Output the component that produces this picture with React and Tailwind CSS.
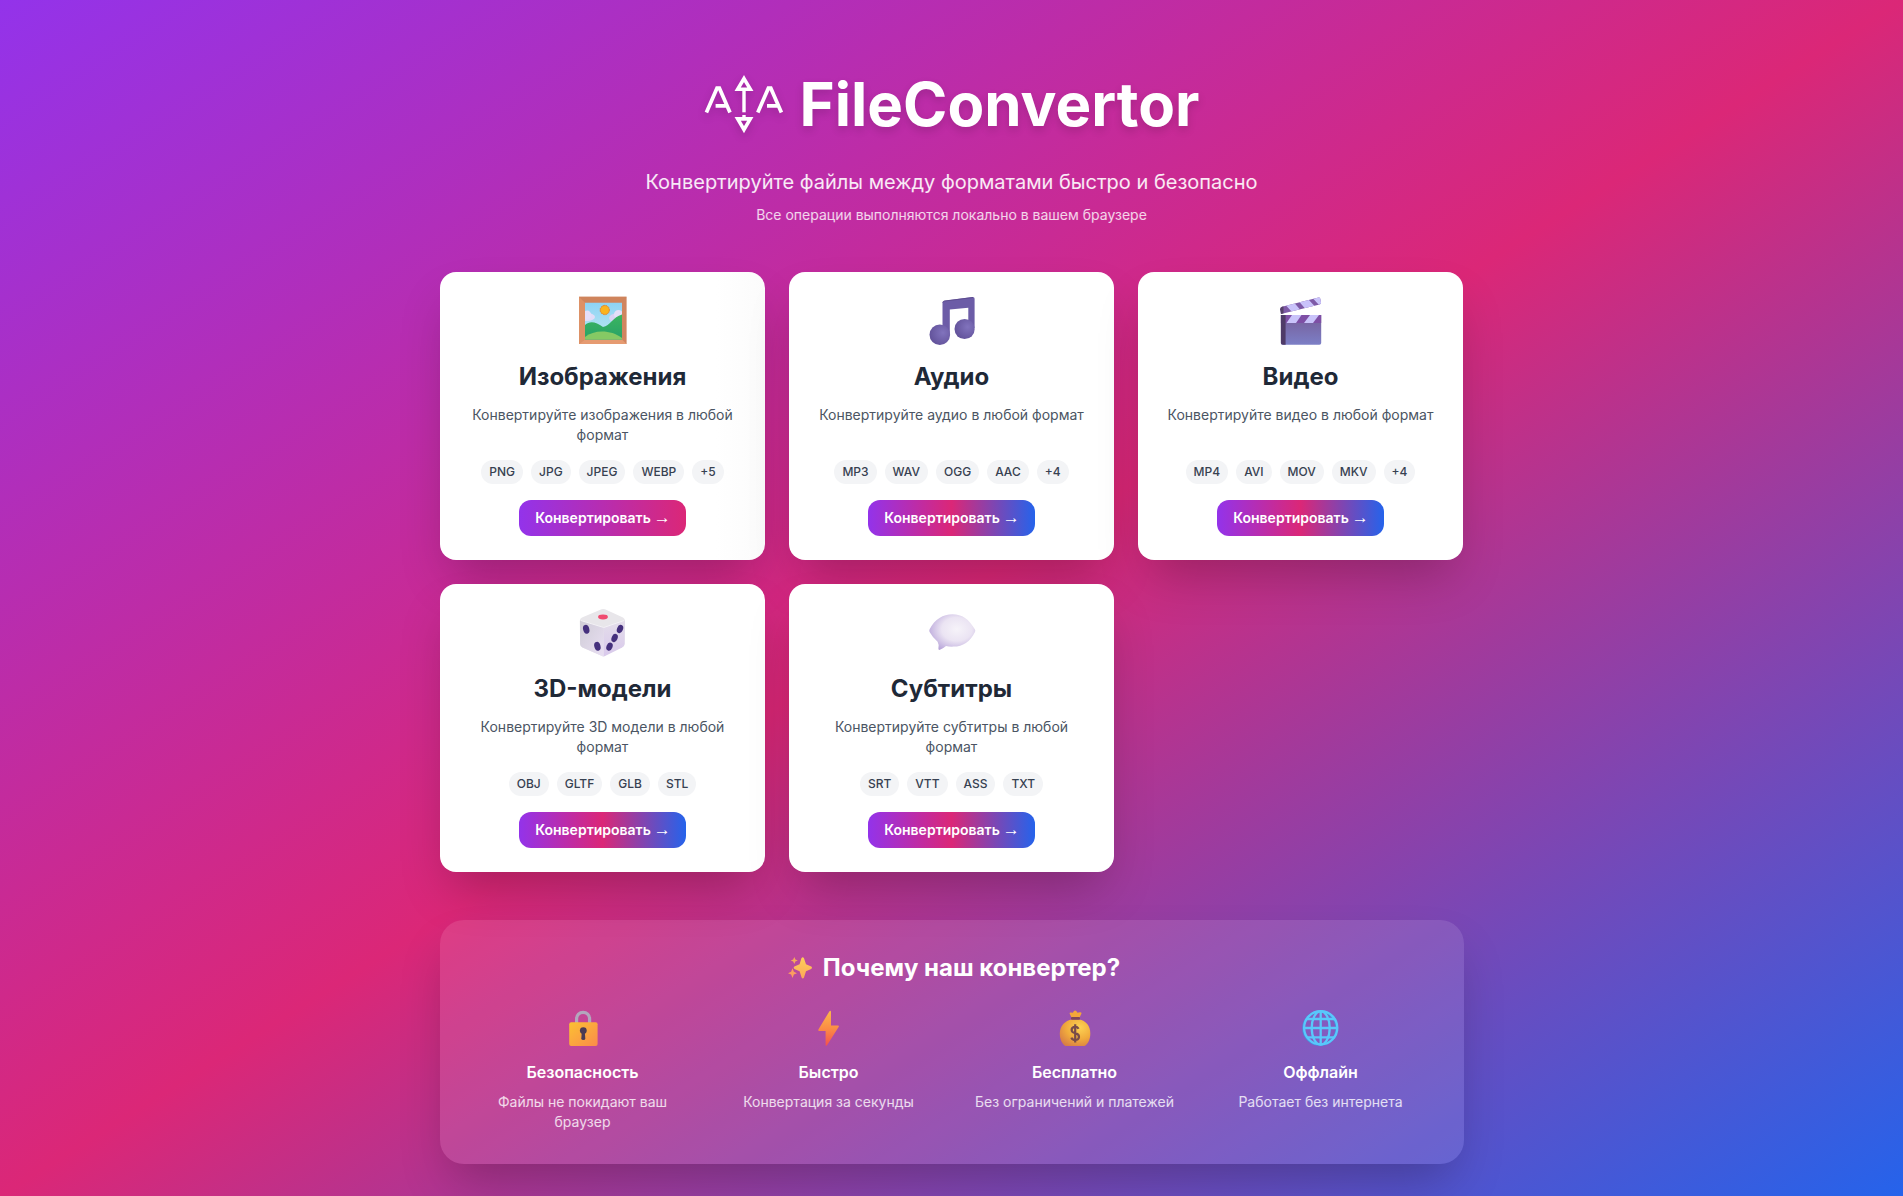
import React from 'react';

const Logo = () => (
  <svg viewBox="0 0 80 80" className="h-20 w-20 drop-shadow-lg" fill="none" stroke="#fff" strokeWidth="3.7">
    <path d="M2.4 48.4 L13 24.2 H15.4 L26 48.4 M22.8 41.8 H11.6" />
    <path d="M53.8 48.4 L64.4 24.2 H66.8 L77.4 48.4 M74.2 41.8 H63" />
    <path d="M40 26 V48.3" strokeWidth="3.4" />
    <path d="M40 14.6 L46.3 25.2 H33.7 Z" strokeWidth="3.6" />
    <path d="M40 65.6 L46.3 54.9 H33.7 Z" strokeWidth="3.6" />
    <path d="M40 51 V54" strokeWidth="3.4" />
  </svg>
);

const Picture = () => (
  <svg viewBox="0 0 48 48" className="h-12 w-12">
    <defs>
      <linearGradient id="sky" x1="0" y1="0" x2="0" y2="1"><stop stopColor="#8dd3f5" /><stop offset="1" stopColor="#bfe8f0" /></linearGradient>
      <linearGradient id="hill" x1="0" y1="0" x2="0" y2="1"><stop stopColor="#3bb55f" /><stop offset="1" stopColor="#27a168" /></linearGradient>
      <clipPath id="canvas"><rect x="6" y="6.5" width="37" height="37" /></clipPath>
    </defs>
    <rect x="0" y="0.8" width="47.6" height="47.2" fill="#d08560" />
    <path d="M0 0.8 L6 6.5 V43.5 L0 48 Z" fill="#dd9166" />
    <path d="M0 0.8 H47.6 L43 6.5 H6 Z" fill="#cf845c" />
    <path d="M0 48 H47.6 L43 43.5 H6 Z" fill="#e69b71" />
    <g clipPath="url(#canvas)">
      <rect x="6" y="6.5" width="37" height="37" fill="url(#sky)" />
      <ellipse cx="8" cy="21" rx="8" ry="4" fill="#e2dcf7" />
      <circle cx="8" cy="19" r="4.4" fill="#e5def8" />
      <ellipse cx="38" cy="22" rx="8" ry="4.6" fill="#d9d2f4" />
      <circle cx="39.5" cy="18.5" r="4.5" fill="#e5def8" />
      <path d="M6 29 C11 24.5 17 26 24 31 C31 30 34 21 43 18.5 V44 H6Z" fill="url(#hill)" />
      <path d="M6 41 C15 33.5 32 33.5 43 42 V44 H6Z" fill="#86c964" />
    </g>
    <circle cx="25.8" cy="14" r="4.7" fill="#e58d30" strokeDasharray="1.5 1" stroke="#e58d30" />
    <circle cx="25.8" cy="14" r="4" fill="#fbb41f" />
  </svg>
);

const Music = () => (
  <svg viewBox="0 0 48 48" className="h-12 w-12 overflow-visible">
    <defs>
      <radialGradient id="note" cx="0.65" cy="0.4" r="0.65"><stop stopColor="#8173bd" /><stop offset="1" stopColor="#63539b" /></radialGradient>
    </defs>
    <path d="M14.5 6.6 Q14.6 5 16.4 4.7 L44.5 1 Q46.6 0.8 46.6 2.8 V32 H40.3 V11.7 L21.8 13.6 V38 H14.5 Z" fill="#6c5ca7" />
    <path d="M14.7 6.5 Q15 5.2 16.5 5 L45 1.5" stroke="#5a4a8c" strokeWidth="0.9" fill="none" />
    <circle cx="11.8" cy="38.8" r="10.3" fill="url(#note)" />
    <circle cx="36.6" cy="33" r="10.1" fill="url(#note)" />
  </svg>
);

const Clapper = () => (
  <svg viewBox="0 0 48 48" className="h-12 w-12 overflow-visible">
    <defs>
      <linearGradient id="slate" x1="0" y1="0" x2="0" y2="1"><stop stopColor="#765d98" /><stop offset="1" stopColor="#7c7fc6" /></linearGradient>
      <clipPath id="arm"><path d="M3.2 13.2 Q3.2 11.2 5 10.7 L41.5 1.6 Q43 1.3 43.4 3 L44 6.5 Q44.2 8 42.6 8.4 L4 18 Z" /></clipPath>
      <clipPath id="bar"><rect x="3.9" y="19" width="40.3" height="8" /></clipPath>
    </defs>
    <g clipPath="url(#arm)">
      <rect width="48" height="20" fill="#7e5aa7" />
      <rect width="6.5" height="20" fill="#564169" />
      <path d="M8.5 9 L17 6.5 L23 13.5 L15 16Z M22 5.5 L31 3 L37.5 10 L28.5 13Z M36 2.5 L43 0 L49 7 L42 9Z" fill="#c9c3fa" />
    </g>
    <path d="M3.9 19 H44.2 V47 Q44.2 48.8 42.4 48.8 H5.8 Q3.9 48.8 3.9 47 Z" fill="url(#slate)" />
    <g clipPath="url(#bar)">
      <rect y="19" width="48" height="8" fill="#7e4fa5" />
      <path d="M15 19 H24.5 L19 27 H9.5 Z M33 19 H42 L36 27 H27 Z" fill="#c9c3fa" />
    </g>
    <path d="M3.9 19 H8.6 V48.8 H5.8 Q3.9 48.8 3.9 47Z" fill="#4f3b68" />
  </svg>
);

const Dice = () => (
  <svg viewBox="0 0 48 48" className="h-12 w-12 overflow-visible">
    <defs>
      <linearGradient id="dl" x1="0" y1="0" x2="1" y2="1"><stop stopColor="#cfccd6" /><stop offset="1" stopColor="#e9dff3" /></linearGradient>
      <linearGradient id="dr" x1="0" y1="0" x2="0" y2="1"><stop stopColor="#e4deea" /><stop offset="1" stopColor="#d9c9ec" /></linearGradient>
    </defs>
    <path d="M22.5 1.2 Q24 .6 26 1.2 L44 9.5 Q46 10.7 46 13 L45.6 36 Q45.4 38.4 43 39.6 L26 48 Q24.5 48.8 23 48 L3.5 39.6 Q1.3 38.5 1.1 36 L.8 13 Q.9 10.6 3 9.6 Z" fill="#e8e6ea" />
    <path d="M1 12 L24.8 19.3 V48.5 Q24 48.5 23 48 L3.5 39.6 Q1.3 38.5 1.1 36Z" fill="url(#dl)" />
    <path d="M46 12 L24.8 19.3 V48.5 L43 39.6 Q45.4 38.4 45.6 36Z" fill="url(#dr)" />
    <path d="M1.5 12.4 L24.8 19.5 L45.4 12.4" fill="none" stroke="#f4f2f6" strokeWidth="1" />
    <ellipse cx="24" cy="9" rx="4.9" ry="2.4" fill="#f04b70" />
    <g fill="#45307d">
      <ellipse cx="7.2" cy="21.3" rx="3.1" ry="4.5" transform="rotate(-15 7.2 21.3)" />
      <ellipse cx="18.4" cy="38.3" rx="3.1" ry="4.5" transform="rotate(-15 18.4 38.3)" />
      <ellipse cx="41" cy="21" rx="3" ry="4.2" transform="rotate(22 41 21)" />
      <ellipse cx="35.6" cy="30" rx="3" ry="4.2" transform="rotate(22 35.6 30)" />
      <ellipse cx="30.5" cy="38.7" rx="3" ry="4.2" transform="rotate(22 30.5 38.7)" />
    </g>
  </svg>
);

const Bubble = () => (
  <svg viewBox="0 0 48 48" className="h-12 w-12">
    <defs>
      <radialGradient id="bub" cx="0.6" cy="0.42" r="0.66"><stop stopColor="#f6f3f9" /><stop offset="0.5" stopColor="#ebe4f3" /><stop offset="1" stopColor="#b9a6da" /></radialGradient>
    </defs>
    <path d="M24.5 6.2 C34 6.2 41 11 47 21.5 Q47.6 22.8 47 24 C42 34 35 38.6 25.5 38.6 Q21 38.8 18 38 Q15 40.8 11.5 41.9 Q10.2 42 10.4 40.6 Q11.2 36.5 9.6 33.8 Q5 30 1.6 24 Q.9 22.6 1.6 21.2 C7 11 15 6.2 24.5 6.2Z" fill="url(#bub)" />
  </svg>
);

const Lock = () => (
  <svg viewBox="0 0 36 36" className="h-9 w-9">
    <defs>
      <linearGradient id="lock" x1="0" y1="0" x2="1" y2="1"><stop stopColor="#fbc132" /><stop offset="1" stopColor="#fb8b4b" /></linearGradient>
    </defs>
    <path d="M11.6 13.5 V8.8 A6.5 6.5 0 0 1 24.6 8.8 V13.5" fill="none" stroke="#b3a6bd" strokeWidth="3.2" />
    <rect x="4.2" y="12.3" width="28.4" height="23.7" rx="2" fill="url(#lock)" />
    <circle cx="18.3" cy="20.6" r="3.4" fill="#4b3b54" />
    <path d="M16.8 22 H19.8 L20.3 28.5 Q20.3 30 18.3 30 Q16.3 30 16.3 28.5Z" fill="#4b3b54" />
  </svg>
);

const Bolt = () => (
  <svg viewBox="0 0 36 36" className="h-9 w-9">
    <defs>
      <linearGradient id="bolt" x1="0" y1="0" x2="0" y2="1"><stop stopColor="#fcb84b" /><stop offset="0.5" stopColor="#fb8d45" /><stop offset="1" stopColor="#f4504f" /></linearGradient>
    </defs>
    <path d="M18.3 1.4 Q19.9 0 20 2 V15.4 H27 Q28.4 15.6 27.6 17 L16.2 35 Q14.6 36.8 14.6 34.8 V21 H8.2 Q6.8 20.8 7.4 19.5 Z" fill="url(#bolt)" />
  </svg>
);

const Bag = () => (
  <svg viewBox="0 0 36 36" className="h-9 w-9">
    <defs>
      <radialGradient id="bag" cx="0.65" cy="0.3" r="0.8"><stop stopColor="#fdd254" /><stop offset="0.55" stopColor="#f1ab3c" /><stop offset="1" stopColor="#d77d45" /></radialGradient>
    </defs>
    <path d="M14.5 7.5 L12.6 3.6 Q12.5 2.4 14 2.6 L15.8 2.8 L17 1 Q18 .2 19.3 1 L20.5 2.8 L22.8 2.3 Q24.8 2.2 24.5 3.6 L22.6 7.5Z" fill="#f4a63a" />
    <path d="M15 9.5 H22 C29 10.5 33.3 16 33.3 23.5 C33.3 29.5 31 34 27.5 36 H8.5 C5 34 2.8 29.5 2.8 23.5 C2.8 16 8 10.5 15 9.5Z" fill="url(#bag)" />
    <rect x="14" y="7" width="9" height="2.8" rx="1" fill="#80465a" />
    <path d="M21.6 18.7 Q20.5 16.8 18.3 16.8 Q14.6 17 14.6 20 Q14.8 22.5 18.2 23.2 Q22 24 22 27 Q21.7 30 18.3 30 Q15.2 30 14.4 27.6 M18.2 14.2 V32.4" fill="none" stroke="#794c49" strokeWidth="2.2" />
  </svg>
);

const Globe = () => (
  <svg viewBox="0 0 36 36" className="h-9 w-9 overflow-visible" fill="none" stroke="#59c8fb" strokeWidth="2.3">
    <circle cx="17" cy="18.3" r="16.6" stroke="#4492df" />
    <circle cx="17.7" cy="17.8" r="16.6" />
    <ellipse cx="17.7" cy="18" rx="9" ry="16.6" />
    <path d="M17.7 1 V35 M1 18 H34.5 M4 9 H31.6 M4 27.3 H31.6" />
  </svg>
);

const Sparkles = () => (
  <svg viewBox="0 0 24 24" className="h-6 w-6">
    <defs>
      <linearGradient id="spark" x1="0" y1="0" x2="0" y2="1"><stop stopColor="#fdcf58" /><stop offset="1" stopColor="#fda75a" /></linearGradient>
    </defs>
    <path d="M13.4 2.2 Q14.8 .3 16 2.2 L18 8.2 L23.2 10.6 Q24.8 11.8 23.2 13 L18 15.2 L16 21.6 Q14.8 23.4 13.6 21.6 L11.6 15.2 L6.4 13 Q5 11.8 6.4 10.6 L11.6 8.2 Z" fill="url(#spark)" />
    <path d="M6.3 1 L7.4 3.4 L9.8 4.5 L7.4 5.6 L6.3 8 L5.2 5.6 L2.8 4.5 L5.2 3.4Z" fill="#f6a95b" />
    <path d="M4.5 12.3 L5.9 15.8 L9 17.2 L5.9 18.6 L4.5 22 L3.1 18.6 L0 17.2 L3.1 15.8Z" fill="#fb9d60" />
  </svg>
);

const cards = [
  {
    icon: Picture,
    title: 'Изображения',
    text: 'Конвертируйте изображения в любой формат',
    tags: ['PNG', 'JPG', 'JPEG', 'WEBP', '+5'],
    surface: 'bg-[linear-gradient(to_right,#fff_85%,#fbfbfb)]',
    button: 'bg-[linear-gradient(to_right,#9333ea,#db2777)]',
  },
  { icon: Music, title: 'Аудио', text: 'Конвертируйте аудио в любой формат', tags: ['MP3', 'WAV', 'OGG', 'AAC', '+4'] },
  { icon: Clapper, title: 'Видео', text: 'Конвертируйте видео в любой формат', tags: ['MP4', 'AVI', 'MOV', 'MKV', '+4'] },
  { icon: Dice, title: '3D-модели', text: 'Конвертируйте 3D модели в любой формат', tags: ['OBJ', 'GLTF', 'GLB', 'STL'] },
  { icon: Bubble, title: 'Субтитры', text: 'Конвертируйте субтитры в любой формат', tags: ['SRT', 'VTT', 'ASS', 'TXT'] },
];

const reasons = [
  { icon: Lock, title: 'Безопасность', text: 'Файлы не покидают ваш браузер' },
  { icon: Bolt, title: 'Быстро', text: 'Конвертация за секунды' },
  { icon: Bag, title: 'Бесплатно', text: 'Без ограничений и платежей' },
  { icon: Globe, title: 'Оффлайн', text: 'Работает без интернета' },
];

const Card = ({
  icon: Icon,
  title,
  text,
  tags,
  surface = 'bg-white',
  button = 'bg-[linear-gradient(to_right,#9333ea,#db2777,#2563eb)]',
}) => (
  <article className={`flex flex-col items-center rounded-2xl p-6 text-center shadow-2xl ${surface}`}>
    <Icon />
    <h2 className="mt-[17px] mb-3 text-2xl font-bold text-[#1f2937]">{title}</h2>
    <p className="mb-[15px] min-h-10 text-sm text-[#4b5563]">{text}</p>
    <div className="mb-4 flex justify-center gap-2">
      {tags.map((t) => (
        <span key={t} className="rounded-full bg-[#f3f4f6] px-2 py-1 text-xs font-medium text-[#374151]">{t}</span>
      ))}
    </div>
    <button className={`flex h-9 w-[167px] items-center justify-center gap-[3px] rounded-xl pl-px text-sm font-semibold whitespace-nowrap text-white ${button}`}>
      Конвертировать
      <span className="font-['Liberation_Sans',sans-serif] text-[17px] leading-5 font-normal">→</span>
    </button>
  </article>
);

export default function App() {
  return (
    <div className="min-h-screen bg-[linear-gradient(to_bottom_right,#9333ea,#db2777,#2563eb)] px-8 pt-16 pb-8 font-['Inter',sans-serif]">
      <main className="mx-auto max-w-5xl">
        <header className="mb-[47px] text-center text-white">
          <div className="mb-6 flex items-center justify-center gap-4">
            <Logo />
            <h1 className="text-6xl leading-none font-bold [text-shadow:0_4px_8px_rgba(0,0,0,0.15)]">FileConvertor</h1>
          </div>
          <p className="mb-[9px] text-xl leading-7 text-white/90">Конвертируйте файлы между форматами быстро и безопасно</p>
          <p className="text-sm text-white/80">Все операции выполняются локально в вашем браузере</p>
        </header>

        <div className="grid grid-cols-[repeat(3,325px)] gap-6 pl-[0.5px]">
          {cards.map((c) => <Card key={c.title} {...c} />)}
        </div>

        <section className="mt-12 rounded-3xl bg-white/10 p-8 text-center text-white shadow-2xl">
          <h2 className="mb-6 flex items-center justify-center gap-[11px] pl-[5px] text-2xl font-bold">
            <Sparkles />
            Почему наш конвертер?
          </h2>
          <div className="grid grid-cols-4 gap-6">
            {reasons.map(({ icon: Icon, title, text }) => (
              <div key={title} className="flex flex-col items-center">
                <div className="mb-3 flex h-10 items-center"><Icon /></div>
                <h3 className="mb-2 font-semibold">{title}</h3>
                <p className="text-sm text-white/80">{text}</p>
              </div>
            ))}
          </div>
        </section>
      </main>
    </div>
  );
}
